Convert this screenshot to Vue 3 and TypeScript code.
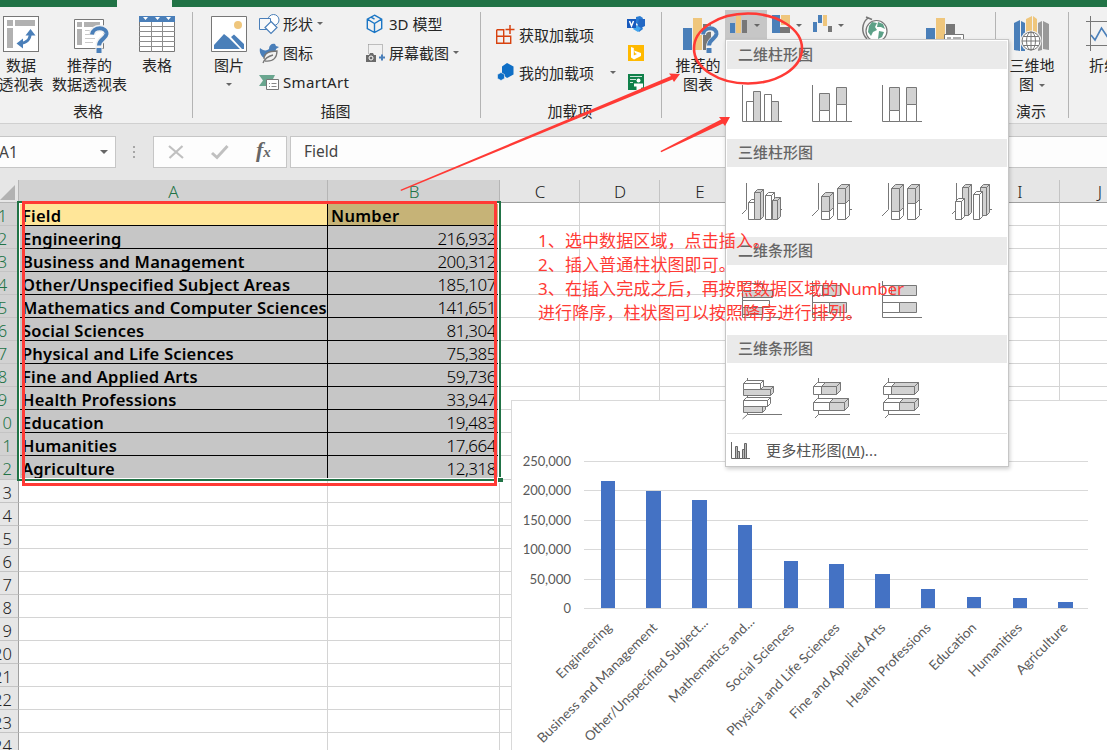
<script setup lang="ts">
interface Face { p: string; f: string }

const GRAY = '#d2d2d2'
const WHITE = '#ffffff'

const rect = (x: number, y: number, w: number, h: number, f: string): Face => ({
  p: `M${x} ${y}h${w}v${h}h${-w}z`, f,
})
const line = (p: string): Face => ({ p, f: 'none' })

// Upright prism: front face plus a top and a right side, d deep
const prism = (x: number, y: number, w: number, h: number, d: number, f: string, side = f): Face[] => [
  { p: `M${x} ${y}l${d} ${-d}h${w}l${-d} ${d}z`, f },
  { p: `M${x + w} ${y}l${d} ${-d}v${h}l${-d} ${d}z`, f: side },
  rect(x, y, w, h, f),
]
const stackV = (x: number, y: number, split: number, w: number): Face[] => [
  ...prism(x, split, w, 36.5 - split, 4, WHITE),
  ...prism(x, y, w, split - y, 4, GRAY),
]
const stackH = (y: number, split: number, end: number): Face[] => [
  ...prism(1.5, y, split - 1.5, 8, 4, WHITE),
  ...prism(split, y, end - split, 8, 4, GRAY),
]

const axis = line('M.5 0V36.5H40')
const axis3 = line('M4.5 0V26.5L0 31M36 26.5H40')
const axis3w = line('M6.5 0V26.5L0 33M34 26.5H40')
const axisH = line('M5.5 -1V35.5L.5 40M5.5 35.5H40')
const axisHw = line('M6.5 -1V35.5L3 39M6.5 35.5H38')

const sections: { title: string; icons: Face[][] }[] = [
  {
    title: '二维柱形图',
    icons: [
      [axis, rect(4.5, 16.5, 7, 20, WHITE), rect(11.5, 6.5, 7, 30, GRAY), rect(22.5, 9.5, 7, 27, WHITE), rect(29.5, 16.5, 7, 20, GRAY)],
      [axis, rect(7.5, 8.5, 10, 17, GRAY), rect(7.5, 25.5, 10, 11, WHITE), rect(24.5, 2.5, 10, 17, GRAY), rect(24.5, 19.5, 10, 17, WHITE)],
      [axis, rect(7.5, 2.5, 10, 23, GRAY), rect(7.5, 25.5, 10, 11, WHITE), rect(24.5, 2.5, 10, 17, GRAY), rect(24.5, 19.5, 10, 17, WHITE)],
    ],
  },
  {
    title: '三维柱形图',
    icons: [
      [axis3, ...prism(6.5, 19.5, 6, 17, 3, WHITE), ...prism(12.5, 9.5, 6, 27, 3, GRAY), ...prism(23.5, 12.5, 6, 24, 3, WHITE), ...prism(30.5, 17.5, 5, 19, 3, GRAY)],
      [axis3w, ...stackV(9.5, 13.5, 28.5, 8), ...stackV(25.5, 5.5, 20.5, 8)],
      [axis3w, ...stackV(9.5, 5.5, 28.5, 8), ...stackV(25.5, 5.5, 20.5, 8)],
      [axis3, ...prism(10.5, 4.5, 6, 28, 3, GRAY), ...prism(28.5, 4.5, 6, 28, 3, GRAY), ...prism(3.5, 18.5, 6, 18, 3, WHITE), ...prism(21.5, 11.5, 6, 25, 3, WHITE)],
    ],
  },
  {
    title: '二维条形图',
    icons: [
      [axis, rect(0.5, 2.5, 20, 7, WHITE), rect(0.5, 9.5, 30, 7, GRAY), rect(0.5, 19.5, 27, 7, WHITE), rect(0.5, 26.5, 20, 7, GRAY)],
      [axis, rect(0.5, 4.5, 10, 10, WHITE), rect(10.5, 4.5, 18, 10, GRAY), rect(0.5, 21.5, 17, 10, WHITE), rect(17.5, 21.5, 17, 10, GRAY)],
      [axis, rect(0.5, 4.5, 9, 10, WHITE), rect(9.5, 4.5, 25, 10, GRAY), rect(0.5, 21.5, 17, 10, WHITE), rect(17.5, 21.5, 17, 10, GRAY)],
    ],
  },
  {
    title: '三维条形图',
    icons: [
      [axisH, ...prism(1.5, 10.5, 27, 6, 3, GRAY), ...prism(1.5, 4.5, 17, 6, 3, WHITE), ...prism(1.5, 27.5, 19, 6, 3, GRAY), ...prism(1.5, 21.5, 24, 6, 3, WHITE)],
      [axisHw, ...stackH(7.5, 9.5, 24.5), ...stackH(23.5, 17.5, 32.5)],
      [axisHw, ...stackH(7.5, 9.5, 32.5), ...stackH(23.5, 17.5, 32.5)],
    ],
  },
]

const table: [string, string][] = [
  ['Field', 'Number'],
  ['Engineering', '216,932'],
  ['Business and Management', '200,312'],
  ['Other/Unspecified Subject Areas', '185,107'],
  ['Mathematics and Computer Sciences', '141,651'],
  ['Social Sciences', '81,304'],
  ['Physical and Life Sciences', '75,385'],
  ['Fine and Applied Arts', '59,736'],
  ['Health Professions', '33,947'],
  ['Education', '19,483'],
  ['Humanities', '17,664'],
  ['Agriculture', '12,318'],
]
const rows = Array.from({ length: 24 }, (_, i) => i + 1)
const columns = ['A', 'B', 'C', 'D', 'E', 'F', 'G', 'H', 'I', 'J']
const emptyColumns = columns.slice(2)

const bars = [
  { t: 'Engineering', x: 601, w: 14, y: 481, len: 72, lift: 0 },
  { t: 'Business and Management', x: 646, w: 15, y: 491, len: 163, lift: 0 },
  { t: 'Other/Unspecified Subject...', x: 692, w: 15, y: 500, len: 168, lift: 5 },
  { t: 'Mathematics and...', x: 738, w: 14, y: 525, len: 115, lift: 6 },
  { t: 'Social Sciences', x: 784, w: 14, y: 561, len: 90, lift: 0 },
  { t: 'Physical and Life Sciences', x: 829, w: 15, y: 564, len: 153, lift: 0 },
  { t: 'Fine and Applied Arts', x: 875, w: 15, y: 574, len: 129, lift: 0 },
  { t: 'Health Professions', x: 921, w: 14, y: 589, len: 113, lift: 0 },
  { t: 'Education', x: 967, w: 14, y: 597, len: 60.5, lift: 0 },
  { t: 'Humanities', x: 1013, w: 14, y: 598, len: 69.6, lift: 0 },
  { t: 'Agriculture', x: 1058, w: 15, y: 602, len: 66.5, lift: 0 },
]
const ticks = [
  { t: '250,000', y: 461 },
  { t: '200,000', y: 490 },
  { t: '150,000', y: 520 },
  { t: '100,000', y: 549 },
  { t: '50,000', y: 579 },
  { t: '0', y: 608 },
]
</script>

<template>
  <div class="window">
    <div class="titlebar"><div class="active-tab"></div></div>

    <div class="ribbon">
      <section class="group g-tables">
        <div class="tools">
          <div class="big b-pivot">
            <svg width="36" height="36" viewBox="0 0 36 36">
              <rect x=".5" y=".5" width="35" height="35" fill="#fff" stroke="#777" />
              <path d="M4 4h6v6H4zM12 4h20v6H12zM4 12h6v20H4z" fill="#b1b1b1" />
              <path d="M17 27.500C24 27 27 24 27.500 16.500" fill="none" stroke="#4a7fb9" stroke-width="3" />
              <path d="M22.500 19.500l5-6.500 5 6.500zM20 22.500l-6.500 5 6.500 5z" fill="#4a7fb9" />
            </svg>
            <span>数据<br />透视表</span>
          </div>
          <div class="big b-recpivot">
            <svg width="36" height="36" viewBox="-1 0 36 36">
              <path d="M1.500 3.500h29v29h-29z" fill="#fff" stroke="#777" />
              <path d="M4 6h5v5H4zM11 6h16v5H11zM4 13h5v16H4z" fill="#b1b1b1" />
              <path d="M12 14.500h10M12 18.500h8M12 22.500h10M12 26.500h8" stroke="#c9c9c9" />
              <path d="M19 18.500c1-8.500 15-8 14.500-.5 -.5 5-7.500 5-7.500 11.500v8" fill="none" stroke="#f1f1f1" stroke-width="7" />
              <path d="M19 18.500c1-8.500 15-8 14.500-.5 -.5 5-7.500 5-7.500 11.500" fill="none" stroke="#4a7fb9" stroke-width="4" />
              <path d="M23.500 32h5v5h-5z" fill="#4a7fb9" />
            </svg>
            <span>推荐的<br />数据透视表</span>
          </div>
          <div class="big b-table">
            <svg width="36" height="36" viewBox="0 0 36 36">
              <path d="M.5 .5h35v35H.5z" fill="#fff" stroke="#777" />
              <path d="M0 0h36v6H0z" fill="#4a7fb9" />
              <path d="M4 1h5l-2.500 3zM16 1h5l-2.500 3zM27 1h5l-2.500 3z" fill="#fff" />
              <path d="M12.500 6v30M23.500 6v30M0 10.500h36M0 15.500h36M0 20.500h36M0 25.500h36M0 30.500h36" stroke="#8d8d8d" />
            </svg>
            <span>表格</span>
          </div>
        </div>
        <footer>表格</footer>
      </section>

      <section class="group g-illus">
        <div class="tools">
          <div class="big b-pic">
            <svg width="36" height="36" viewBox="0 0 36 36">
              <path d="M.5 .5h35v35H.5z" fill="#fff" stroke="#777" />
              <circle cx="27" cy="9" r="4" fill="#efc67c" />
              <path d="M3 33v-4l10-11 5 4 11 11zM20 21l3-2.500L33 28v5h-2z" fill="#4a7fb9" />
            </svg>
            <span>图片</span>
            <i class="caret"></i>
          </div>
          <div class="smalls s-one">
            <div class="small">
              <svg width="21" height="20" viewBox="0 0 21 20">
                <circle cx="14.500" cy="6" r="5.500" fill="#fff" stroke="#4a7fb9" />
                <path d="M.5 4.500h11v11H.5z" fill="#f8f8f8" stroke="#4a7fb9" />
                <path d="M12 7.500l6 6-6 6-6-6z" fill="#fff" stroke="#4a7fb9" stroke-width="1.200" />
              </svg>
              <span>形状</span><i class="caret"></i>
            </div>
            <div class="small">
              <svg width="21" height="20" viewBox="0 0 21 20">
                <path d="M1 5c3 3 7 3 9 1 0-4 3-6 6-5l1 2 3 1-3 2c0 4-5 4-8 7l-4 2C2 13 0 9 1 5z" fill="#4a7fb9" />
                <path d="M5 16c0-6 6-8 13-8 0 6-3 11-12 10M4 20c2-5 6-7 10-8" fill="#f1f1f1" stroke="#777" stroke-width="1.300" />
              </svg>
              <span>图标</span>
            </div>
            <div class="small">
              <svg width="21" height="20" viewBox="0 0 21 20">
                <path d="M0 3h16l-2 4H8v7H0l4-5.500z" fill="#6aa68f" />
                <path d="M7.500 7.500h12v10h-12z" fill="#fff" stroke="#777" />
                <path d="M10 11.500h1M12.500 11.500h5M10 14.500h1M12.500 14.500h5" stroke="#888" />
              </svg>
              <span class="latin">SmartArt</span>
            </div>
          </div>
          <div class="smalls s-two">
            <div class="small">
              <svg width="20" height="20" viewBox="0 0 20 20">
                <path d="M8.500 1.200l7.200 4v9.300l-7.200 4-7.200-4V5.200zM1.300 5.200l7.200 4.300 7.200-4.300M8.500 9.500v9M5 3.200l3.500 2" fill="none" stroke="#1b76c5" stroke-width="1.400" />
              </svg>
              <span>3D 模型</span>
            </div>
            <div class="small">
              <svg width="20" height="20" viewBox="0 0 20 20">
                <path d="M2.500 1.500h14v12" fill="none" stroke="#888" stroke-dasharray="1 1" />
                <path d="M2.500 1.500v9" stroke="#888" stroke-dasharray="1 1" />
                <path d="M0 12h3l1-2h3l1 2h2v7H0z" fill="#6a6a6a" />
                <circle cx="5" cy="15" r="2" fill="none" stroke="#fff" />
                <path d="M13 14.500h6M16 11.500v6" stroke="#4a7fb9" stroke-width="2" />
              </svg>
              <span>屏幕截图</span><i class="caret"></i>
            </div>
          </div>
        </div>
        <footer>插图</footer>
      </section>

      <section class="group g-addins">
        <div class="tools">
          <div class="addins">
            <div class="small">
              <svg width="20" height="20" viewBox="0 0 20 20">
                <path d="M.7 5.700h7v14M.7 5.700v13.600h14v-7H.7" fill="none" stroke="#d8420f" stroke-width="1.400" />
                <path d="M14 1v9M9.500 5.500h9" stroke="#d8420f" stroke-width="1.500" />
              </svg>
              <span>获取加载项</span>
            </div>
            <div class="small">
              <svg width="20" height="20" viewBox="-1 0 20 20">
                <path d="M10 1l6.500 3.500v8L10 16l-5-4V4.500z" fill="#0f6fc6" />
                <path d="M4 10.500l3.500 2v4L4 18.500l-3.500-2v-4z" fill="#0f6fc6" stroke="#f1f1f1" stroke-width=".6" />
              </svg>
              <span>我的加载项</span><i class="caret"></i>
            </div>
          </div>
          <div class="apps">
            <svg width="18" height="17" viewBox="0 0 18 17">
              <path d="M9 1l4-1 3 2-3 8-4-3zM9 12l3 4 4-3-2-4z" fill="#2b7cd3" />
              <path d="M12 3h6v7l-4 2h-4z" fill="#2368c4" />
              <path d="M9 9l5 3-3 4-5-3z" fill="#41a5ee" />
              <path d="M0 3h9v9H0z" fill="#185abd" />
              <path d="M2.500 5l2 5 2-5" fill="none" stroke="#fff" stroke-width="1.500" />
            </svg>
            <svg width="17" height="17" viewBox="-1 0 17 17">
              <path d="M0 0h16v16H0z" fill="#ffb900" />
              <path d="M3 2l2.800 1v7.500L9 9 7 8 6 5.500l7 2.500v3L6 14.500l-3-2z" fill="#fff" />
            </svg>
            <svg width="17" height="17" viewBox="-1 0 17 17">
              <path d="M0 0h16v16H0z" fill="#10804a" />
              <path d="M2 2.500h12M2 5.500h6M2 8.500h3" stroke="#fff" opacity=".8" />
              <circle cx="10.500" cy="6.500" r="2" fill="#fff" />
              <path d="M6 9.500h9v4h-1.500l-1 2.500h-4v-3.500H6z" fill="#fff" />
            </svg>
          </div>
        </div>
        <footer>加载项</footer>
      </section>

      <section class="group g-charts">
        <div class="tools">
          <div class="big b-recchart">
            <svg width="36" height="36" viewBox="-3 0 36 36">
              <path d="M0 12h9v22H0z" fill="#4a7fb9" />
              <path d="M10 2h9v32h-9z" fill="#efc67c" />
              <path d="M20 8h8v26h-8z" fill="#777" />
              <path d="M20 19c0-8 13-8.500 13-1 0 6-7 5-7 13v6" fill="none" stroke="#f1f1f1" stroke-width="6" />
              <path d="M20 18.500c1-8.500 14-8 13.500-.5 -.5 5-7.500 5-7.500 11.500" fill="none" stroke="#4a7fb9" stroke-width="4" />
              <path d="M23.500 32h5v5h-5z" fill="#4a7fb9" />
            </svg>
            <span>推荐的<br />图表</span>
          </div>
          <div class="chart-btn pressed">
            <svg width="18" height="20" viewBox="0 0 18 20">
              <path d="M0 8h5v10H0z" fill="#4a7fb9" /><path d="M6 1h5v17H6z" fill="#efc67c" /><path d="M12 5h5v13h-5z" fill="#777" />
            </svg>
            <i class="caret"></i>
          </div>
          <div class="chart-btn">
            <svg width="18" height="20" viewBox="0 0 18 20">
              <path d="M0 0h8v18H0z" fill="#4a7fb9" /><path d="M9 0h9v10H9z" fill="#efc67c" /><path d="M8 12h10v6H8z" fill="#777" />
            </svg>
            <i class="caret"></i>
          </div>
          <div class="chart-btn">
            <svg width="18" height="20" viewBox="1 0 18 20">
              <path d="M0 7h4v10H0zM5 0h4v8H5z" fill="#4a7fb9" /><path d="M10 0h4v11h-4z" fill="#efc67c" /><path d="M15 11h4v6h-4z" fill="#777" />
            </svg>
            <i class="caret"></i>
          </div>
          <svg class="globe" width="28" height="30" viewBox="0 0 28 30">
            <path d="M7 2A14 14 0 0 0 6 23M5 1l6 2.500" fill="none" stroke="#777" stroke-width="1.500" />
            <circle cx="15.500" cy="15" r="10.500" fill="#fff" stroke="#777" stroke-width="1.200" />
            <path d="M8 10l3-4 5 1-2 4 2 3-4 2-2 4-3-4zM17 6l5 2 2 5-4-2-4 0zM18 15l5 1-2 5-4 2z" fill="#5da188" />
          </svg>
          <svg class="pivotchart" width="38" height="36" viewBox="0 0 38 36">
            <path d="M0 10h9v22H0z" fill="#4a7fb9" /><path d="M10 0h9v33h-9z" fill="#efc67c" /><path d="M20 6h9v20h-9z" fill="#777" />
            <path d="M18.500 16.500h19v18h-19z" fill="#fff" stroke="#777" /><path d="M21 19h4v4h-4zM27 19h8v4h-8z" fill="#b1b1b1" />
          </svg>
        </div>
      </section>

      <section class="group g-tours">
        <div class="tools">
          <div class="big b-map">
            <svg width="36" height="36" viewBox="0 0 36 36">
              <path d="M0 7l6-3v31l-6-1zM7 5l4 2v28H7z" fill="#4a7fb9" />
              <path d="M12 3l6-3v28h-6zM19 0l4 3v25h-4z" fill="#efc67c" />
              <path d="M24 7l4-2v29l-4 1zM29 5l6 3v26l-6-1z" fill="#999" />
              <circle cx="17" cy="25" r="10.500" fill="#f1f1f1" />
              <g fill="none" stroke="#777"><circle cx="17" cy="25" r="9" fill="#fff" /><ellipse cx="17" cy="25" rx="4.500" ry="9" /><path d="M17 16v18M8 25h18M9.500 20.500h15M9.500 29.500h15" /></g>
            </svg>
            <span>三维地<br />图<i class="caret inline"></i></span>
          </div>
        </div>
        <footer>演示</footer>
      </section>

      <section class="group g-spark">
        <div class="tools">
          <div class="big b-line">
            <svg width="36" height="36" viewBox="0 0 36 36">
              <path d="M4.500 0v35M0 5.500h36M0 29.500h36" stroke="#777" />
              <path d="M5 19l4 5 6.500-12 6 9 5-7 8 8" fill="none" stroke="#4a7fb9" stroke-width="1.600" />
            </svg>
            <span>折线</span>
          </div>
        </div>
      </section>
    </div>

    <div class="formula-bar">
      <div class="name-box"><span>A1</span><i class="caret wide"></i></div>
      <svg class="grip" width="3" height="14" viewBox="0 0 3 14"><path d="M0 0h2v2H0zM0 5h2v2H0zM0 10h2v2H0z" fill="#a6a6a6" /></svg>
      <div class="fx-box">
        <svg width="16" height="14" viewBox="0 0 16 14"><path d="M1 1l14 12M14.500 1L1.500 13" stroke="#c0c0c0" stroke-width="2.200" /></svg>
        <svg width="18" height="14" viewBox="0 0 18 14"><path d="M1 8l5 4.500L16.500 1" fill="none" stroke="#c0c0c0" stroke-width="3" /></svg>
        <em>f<small>x</small></em>
      </div>
      <div class="input">Field</div>
    </div>

    <div class="sheet">
      <div class="row heads">
        <div class="corner"><svg width="15" height="15" viewBox="0 0 15 15"><path d="M15 0v15H0z" fill="#b2b2b2" /></svg></div>
        <div v-for="(c, i) in columns" :key="c" class="colhead" :class="['c' + c, { sel: i < 2 }]">{{ c }}</div>
      </div>
      <div v-for="n in rows" :key="n" class="row" :class="{ tall: n === 12 }">
        <div class="rowhead" :class="{ sel: n <= 12 }"><span>{{ n }}</span></div>
        <div class="cell cA" :class="{ data: n <= 12, first: n === 1 }">{{ table[n - 1]?.[0] }}</div>
        <div class="cell cB" :class="{ data: n <= 12, first: n === 1 }">{{ table[n - 1]?.[1] }}</div>
        <div v-for="c in emptyColumns" :key="c" class="cell"></div>
      </div>
      <div class="selection"></div>
      <div class="fill-handle"></div>
    </div>

    <div class="chart">
      <svg width="595" height="349" viewBox="512 401 595 349">
        <path v-for="k in ticks" :key="k.t" :d="`M584 ${k.y + 0.5}H1088`" stroke="#d9d9d9" />
        <text v-for="k in ticks" :key="k.y" class="tick" x="571" :y="k.y + 4.500" :textLength="k.t === '0' ? 7.500 : k.t.length * 6.900" lengthAdjust="spacingAndGlyphs">{{ k.t }}</text>
        <template v-for="(b, i) in bars" :key="b.t">
          <rect :x="b.x" :y="b.y" :width="b.w" :height="608 - b.y" fill="#4472c4" />
          <text class="cat" :textLength="b.len" lengthAdjust="spacingAndGlyphs" :transform="`translate(${612.5 + 45.6 * i + b.lift} ${628.5 - b.lift}) rotate(-45)`">{{ b.t }}</text>
        </template>
      </svg>
    </div>

    <div class="menu">
      <template v-for="s in sections" :key="s.title">
        <h3>{{ s.title }}</h3>
        <div class="gallery">
          <svg v-for="(icon, i) in s.icons" :key="i" width="42" height="42" viewBox="0 -1 42 42">
            <path v-for="(face, j) in icon" :key="j" :d="face.p" :fill="face.f" stroke="#777" stroke-linejoin="round" />
          </svg>
        </div>
      </template>
      <div class="more">
        <svg width="20" height="17" viewBox="0 0 20 17">
          <path d="M.5 0v16.500H19" fill="none" stroke="#666" />
          <path d="M4.500 4.500h2v12h-2zM6.500 9.500h2v7h-2zM11.500 7.500h2v9h-2zM13.500 1.500h2v15h-2z" fill="#bbb" stroke="#666" />
        </svg>
        <span>更多柱形图(<u>M</u>)...</span>
      </div>
    </div>

    <svg class="marks" width="1107" height="750" viewBox="0 0 1107 750">
      <rect x="23.500" y="202.500" width="472" height="282" fill="none" stroke="#ff3a35" stroke-width="3" />
      <ellipse cx="748" cy="48.500" rx="54" ry="35" fill="none" stroke="#ff3a35" stroke-width="2.600" />
      <path d="M400.500 189.800L671 76L669 73.500L680 74L674 82L672.500 79.500L401 191.100Z" fill="#ff3a35" />
      <path d="M660.500 151L721 119.500L719 117L730 117L725 126L723 123.500L661.200 152.300Z" fill="#ff3a35" />
    </svg>
    <div class="note">
      1、选中数据区域，点击插入。<br />
      2、插入普通柱状图即可。<br />
      3、在插入完成之后，再按照数据区域的<span>Number</span><br />
      进行降序，柱状图可以按照降序进行排列。
    </div>
  </div>
</template>

<style>
body { margin: 0; background: #fff; }
</style>

<style scoped>
.window {
  position: relative; width: 1107px; height: 750px; overflow: hidden; background: #e6e6e6;
  font-family: "Noto Sans", "Noto Sans CJK SC", sans-serif; color: #262626;
}
.window * { box-sizing: border-box; }
svg { display: block; flex: none; overflow: visible; }
.titlebar { height: 7px; background: #217346; padding-left: 117px; }
.active-tab { width: 55px; height: 7px; background: #f1f1f1; }

.ribbon { display: flex; height: 117px; background: #f1f1f1; border-bottom: 1px solid #d0d0d0; font-size: 15px; }
.group { position: relative; display: flex; flex-direction: column; flex: none; height: 116px; white-space: nowrap; }
.group::after { content: ""; position: absolute; right: 0; top: 5px; width: 1px; height: 106px; background: #b4b4b4; }
.tools { display: flex; height: 94px; align-items: flex-start; }
.group footer { text-align: center; line-height: 20px; height: 22px; padding-right: 3px; }
.g-tables { width: 193px; }
.g-tables footer { padding-right: 17px; }
.g-illus { width: 288px; }
.g-addins { width: 181px; }
.g-charts { width: 334px; }
.g-tours { width: 73px; }
.g-spark { width: 38px; }
.g-spark::after { display: none; }

.big { display: flex; flex-direction: column; align-items: center; padding-top: 9px; text-align: center; line-height: 19px; flex: none; }
.big > span { margin-top: 4px; }
.big > .caret { margin-top: 8px; }
.b-pivot { width: 44px; margin-left: -1px; }
.b-recpivot { width: 79px; margin-left: 7px; }
.b-table { width: 44px; margin-left: 6px; }
.b-pic { width: 44px; margin-left: 14px; }
.b-recchart { width: 50px; margin-left: 11px; }
.b-map { width: 56px; margin-left: 8px; }
.b-line { width: 36px; margin-left: 17px; }

.caret { display: inline-block; flex: none; width: 0; height: 0; border: 3px solid transparent; border-top-color: #666; border-bottom: 0; }
.caret.wide { border-width: 4.500px; border-bottom: 0; }
.caret.inline { margin-left: 5px; vertical-align: middle; }
.small { display: flex; align-items: center; height: 29px; }
.small span { margin-left: 3px; }
.small .latin { letter-spacing: .35px; }
.small .caret { margin-left: 4px; }
.smalls { padding-top: 2px; }
.s-one { width: 107px; margin-left: 8px; }
.addins { width: 131px; margin-left: 15px; padding-top: 8px; }
.addins .small { height: 38px; }
.addins .caret { margin-left: 16px; }
.apps { display: flex; flex-direction: column; gap: 12px; padding-top: 9px; }
.chart-btn { display: flex; align-items: center; height: 30px; width: 42px; margin-top: 3px; padding-left: 5px; gap: 6px; }
.chart-btn.pressed { background: #c6c6c6; margin-left: 2px; }
.globe { margin: 9px 0 0 10px; }
.pivotchart { margin: 11px 0 0 37px; }

.formula-bar { display: flex; height: 56px; padding-top: 12px; align-items: flex-start; }
.formula-bar > div { height: 32px; background: #fdfdfd; border: 1px solid #c6c6c6; display: flex; align-items: center; color: #444; font-size: 15.500px; }
.name-box { width: 117px; margin-left: -1px; justify-content: space-between; padding-right: 7px; }
.name-box span { margin-left: -1px; }
.grip { margin: 10px 17px 0 17px; }
.fx-box { width: 134px; padding-left: 14px; gap: 27px; }
.fx-box em { font: italic bold 22px "Liberation Serif", serif; color: #666; margin-top: -4px; }
.fx-box small { font-size: 15px; }
.formula-bar .input { flex: 1; margin-left: 3px; padding-left: 13px; padding-bottom: 2px; border-right: 0; }

.sheet { position: relative; }
.row { display: flex; height: 23px; }
.row.tall { height: 24px; }
.corner { width: 19px; padding: 5px 0 0 0; border-right: 1px solid #b5b5b5; border-bottom: 1px solid #b5b5b5; flex: none; }
.colhead { flex: none; width: 80px; padding-left: 1px; text-align: center; line-height: 24px; font-size: 17px; font-weight: 300; color: #222; border-right: 1px solid #c4c4c4; border-bottom: 1px solid #9f9f9f; }
.cA.colhead, .cA { width: 309px; }
.cB.colhead, .cB { width: 172px; }
.colhead.sel { background: #d2d2d2; color: #217346; border-right-color: #b5b5b5; }
.rowhead { flex: none; width: 19px; border-right: 1px solid #9f9f9f; border-bottom: 1px solid #c4c4c4; background: #e6e6e6; display: flex; justify-content: center; font-size: 16.500px; font-weight: 300; line-height: 25px; color: #222; }
.rowhead span { width: 20px; margin-left: -13px; text-align: center; }
.rowhead.sel { background: #d2d2d2; color: #217346; }
.cell { flex: none; width: 80px; background: #fff; border-right: 1px solid #d4d4d4; border-bottom: 1px solid #d4d4d4; white-space: nowrap; line-height: 26px; }
.cell.cA { width: 309px; }
.cell.cB { width: 172px; }
.cell.data { background: #c6c6c6; border-color: #000; color: #000; }
.cA.data { font-size: 16.500px; letter-spacing: .22px; font-weight: 600; padding-left: 3px; }
.cB.data { font-size: 17px; font-weight: 300; letter-spacing: -.5px; text-align: right; padding-right: 3px; line-height: 25px; }
.cell.cA.first { background: #ffe699; }
.cell.cB.first { background: #c6b377; font-size: 16.500px; font-weight: 600; letter-spacing: .3px; text-align: left; padding-left: 3px; line-height: 26px; }
.selection { position: absolute; left: 17px; top: 21px; width: 484px; height: 280px; border: 2px solid #217346; box-shadow: inset 0 0 0 1px #fff; }
.fill-handle { position: absolute; left: 497px; top: 297px; width: 6px; height: 6px; background: #217346; border: 1px solid #fff; border-right: 0; }

.chart { position: absolute; left: 511px; top: 400px; width: 597px; height: 351px; background: #fff; border: 1px solid #d9d9d9; }
.chart text { font-family: Lato, "Liberation Sans", sans-serif; font-size: 13.300px; fill: #595959; text-anchor: end; }

.menu { position: absolute; left: 725px; top: 39px; width: 284px; height: 428px; background: #fff; border: 1px solid #c6c6c6; box-shadow: 1px 2px 4px rgba(0, 0, 0, .2); padding: 1px; color: #555; font-size: 15px; }
.menu h3 { margin: 0; height: 28px; line-height: 26px; padding-left: 11px; background: #eaeaea; font-size: 15px; font-weight: 500; color: #666; }
.gallery { display: flex; gap: 28px; height: 70px; padding: 15px 0 0 15px; }
.more { display: flex; align-items: center; height: 34px; border-top: 1px solid #e1e1e1; padding-left: 4px; }
.more span { margin: -3px 0 0 15px; letter-spacing: .15px; }

.marks { position: absolute; left: 0; top: 0; }
.note { position: absolute; left: 538px; top: 229px; color: #ff3a35; font-size: 17px; letter-spacing: .1px; line-height: 24px; white-space: nowrap; }
.note span { letter-spacing: -.2px; }
</style>
